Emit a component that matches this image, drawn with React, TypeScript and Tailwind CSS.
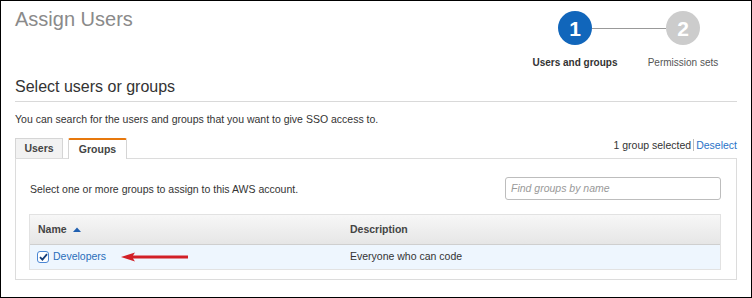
import React from "react";

function StepCircle({ n, active }: { n: number; active: boolean }) {
  return (
    <div
      className={
        "w-[34px] h-[34px] rounded-full flex items-center justify-center text-white font-bold text-[21px] leading-none shrink-0 " +
        (active ? "bg-[#1166bb]" : "bg-[#cccccc]")
      }
    >
      {n}
    </div>
  );
}

function Arrow() {
  return (
    <svg width="68" height="10" viewBox="0 0 68 10" className="ml-[15px]">
      <path d="M0 5 L14 0.5 L12 3.6 L67 3.6 L67 6.4 L12 6.4 L14 9.5 Z" fill="#d21f26" />
    </svg>
  );
}

export default function App() {
  return (
    <div className="w-[752px] h-[298px] border border-black bg-white px-[14px] overflow-hidden font-['Liberation_Sans',Arial,sans-serif] text-[#333]">
      {/* header */}
      <div className="flex justify-between h-[74px]">
        <h1 className="pt-[6px] text-[20px] leading-[24px] text-[#8a8a8a]">Assign Users</h1>
        <div className="pt-[10px] w-[216px]">
          <div className="flex items-center">
            <div className="w-[37px]" />
            <StepCircle n={1} active />
            <div className="h-px w-[74px] bg-[#999]" />
            <StepCircle n={2} active={false} />
            <div className="w-[37px]" />
          </div>
          <div className="flex mt-[12px] text-[10px] leading-[12px]">
            <div className="w-[108px] text-center font-bold text-[#333]">Users and groups</div>
            <div className="w-[108px] text-center text-[#555]">Permission sets</div>
          </div>
        </div>
      </div>

      {/* section title */}
      <h2 className="text-[16px] leading-[20px] text-[#333] pt-[2px] pb-[4px] border-b border-[#d9d9d9]">
        Select users or groups
      </h2>
      <p className="text-[10.5px] leading-[14px] mt-[10px] text-[#333]">
        You can search for the users and groups that you want to give SSO access to.
      </p>

      {/* tabs */}
      <div className="flex items-end justify-between mt-[12px]">
        <div className="flex items-end gap-[5px]">
          <div className="w-[48px] h-[20px] flex items-center justify-center bg-[#f2f2f2] border border-b-0 border-[#d5d5d5] text-[10.5px] font-bold text-[#444]">
            Users
          </div>
          <div className="w-[59px] h-[21px] flex items-center justify-center bg-white border border-b-0 border-[#d5d5d5] border-t-2 border-t-[#e7780d] text-[10.5px] font-bold text-[#444] rounded-t-[2px] -mb-px relative">
            Groups
          </div>
        </div>
        <div className="text-[10.5px] leading-[14px] mb-[6px] flex items-center">
          <span className="text-[#333]">1 group selected</span>
          <span className="inline-block w-px h-[12px] bg-[#bbb] mx-[2px]" />
          <span className="text-[#2a73c7]">Deselect</span>
        </div>
      </div>

      {/* panel */}
      <div className="border border-[#dcdcdc] h-[122px] pl-[13px] pr-[15px] pt-[18px]">
        <div className="flex items-center justify-between">
          <div className="text-[10.5px] leading-[14px] text-[#333] pl-px">
            Select one or more groups to assign to this AWS account.
          </div>
          <div className="w-[216px] h-[23px] border border-[#bdbdbd] rounded-[3px] flex items-center px-[5px] text-[10.5px] italic text-[#999]">
            Find groups by name
          </div>
        </div>

        <div className="mt-[14px] border border-[#e2e2e2]">
          <div className="flex h-[30px] items-center bg-gradient-to-b from-[#f7f7f7] to-[#e6e6e6] border-b border-[#cfcfcf] text-[10.5px] font-bold text-[#444]">
            <div className="w-[311px] pl-[8px] flex items-center">
              Name
              <svg width="8" height="5" viewBox="0 0 8 5" className="ml-[6px]">
                <path d="M0 5 L4 0.5 L8 5 Z" fill="#1f5fb0" />
              </svg>
            </div>
            <div className="pl-[9px]">Description</div>
          </div>
          <div className="flex h-[24px] items-center bg-[#eef6fe] text-[10.5px]">
            <div className="w-[311px] pl-[7px] flex items-center">
              <div className="w-[12px] h-[12px] rounded-[3px] border border-[#4a86d4] bg-white flex items-center justify-center">
                <svg width="9" height="8" viewBox="0 0 9 8">
                  <path d="M1 4.2 L3.4 6.6 L8 1.2" stroke="#163d78" strokeWidth="1.8" fill="none" />
                </svg>
              </div>
              <span className="ml-[4px] text-[#2a6ebb]">Developers</span>
              <Arrow />
            </div>
            <div className="pl-[9px] text-[#333]">Everyone who can code</div>
          </div>
        </div>
      </div>
    </div>
  );
}
